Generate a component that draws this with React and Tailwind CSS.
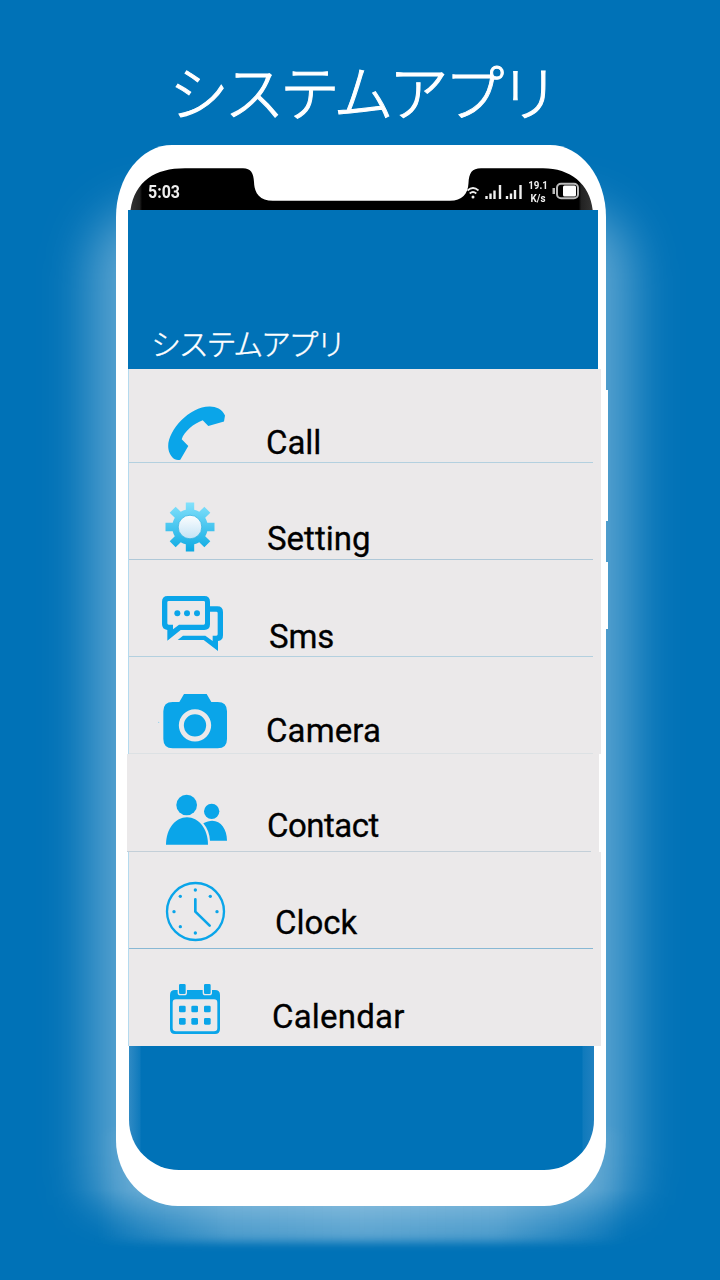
import React from 'react'

const BLUE = "#0aa5e9";

function CallIcon() {
  return (
    <svg className="ml-[39px] mt-[36px] shrink-0" width="58" height="56" viewBox="168 405 58 56">
      <path
        d="M210 406.5C216 406.6 222 409 225 415.5L224 421.5L208.3 426L202.7 420.3C194 423.5 184 431.5 181.7 439.3L188.3 446L180.3 459.7C177 460.3 174 459.5 172.5 457.5C169 453.5 168.2 449 168.2 446C168.2 430 190 406 210 406.5Z"
        fill={BLUE}
      />
    </svg>
  );
}

function SettingIcon() {
  const teeth = [0, 45, 90, 135, 180, 225, 270, 315];
  return (
    <svg className="ml-[36px] mt-[39px] shrink-0" width="50" height="50" viewBox="-25 -25 50 50">
      <defs>
        <linearGradient id="gear" gradientUnits="userSpaceOnUse" x1="0" y1="-25" x2="0" y2="25">
          <stop offset="0" stopColor="#86e2fc" />
          <stop offset="1" stopColor="#0ba9e2" />
        </linearGradient>
        <linearGradient id="hub" x1="0" y1="0" x2="0" y2="1">
          <stop offset="0" stopColor="#fdfeff" />
          <stop offset="1" stopColor="#c3e3f5" />
        </linearGradient>
        <clipPath id="teeth">
          <circle r="17.8" />
          {teeth.map((deg) => (
            <path key={deg} d="M-4.2 -24.5H4.2V-14H-4.2Z" transform={`rotate(${deg})`} />
          ))}
        </clipPath>
      </defs>
      <rect x="-25" y="-25" width="50" height="50" fill="url(#gear)" clipPath="url(#teeth)" />
      <circle r="11.8" fill="url(#hub)" stroke="#39b4e0" strokeWidth="0.8" />
    </svg>
  );
}

function SmsIcon() {
  return (
    <svg className="ml-[33px] mt-[36px] shrink-0" width="62" height="56" viewBox="126 348 186 168">
      <path
        fillRule="evenodd"
        fill={BLUE}
        d="M143 348H253Q270 348 270 365V433Q270 450 253 450H182L142 482V450Q126 448 126 433V365Q126 348 143 348ZM146 363Q142 363 142 367V430Q142 434 146 434H159V448L177 434H251Q255 434 255 430V367Q255 363 251 363Z"
      />
      <path
        fill={BLUE}
        d="M270 379H292Q309 379 309 396V466Q309 482 294 483V513L251 480H173L189 467H256L278 483V467H289Q293 467 293 463V399Q293 395 289 395H270Z"
      />
      <circle cx="172" cy="400" r="9" fill={BLUE} />
      <circle cx="201" cy="400" r="9" fill={BLUE} />
      <circle cx="231" cy="400" r="9" fill={BLUE} />
    </svg>
  );
}

function CameraIcon() {
  return (
    <svg className="ml-[28px] mt-[36px] shrink-0" width="71" height="56" viewBox="111 69 213 168">
      <path
        d="M192 72H260L274 96H293Q321 96 321 124V207Q321 235 293 235H158Q130 235 130 207V124Q130 96 158 96H178Z"
        fill={BLUE}
      />
      <circle cx="225" cy="166" r="41" fill={BLUE} stroke="#ebe9ea" strokeWidth="15" />
      <circle cx="116" cy="157" r="2" fill="#8fd0ef" />
    </svg>
  );
}

function ContactIcon() {
  return (
    <svg className="ml-[38px] mt-[40px] shrink-0" width="63" height="51" viewBox="135 373 189 153">
      <circle cx="200" cy="406" r="31" fill={BLUE} />
      <circle cx="275" cy="425" r="23" fill={BLUE} />
      <path d="M138 525C138 478 166 443 201 443C236 443 264 478 264 525Z" fill={BLUE} />
      <path d="M250 461C290 438 321 468 321 513H270C269 494 263 476 250 461Z" fill={BLUE} />
    </svg>
  );
}

function ClockIcon() {
  const dots = [[226, 90], [271, 109], [291, 155], [226, 219], [181, 200], [162, 155], [181, 109]];
  return (
    <svg className="ml-[36px] mt-[29px] shrink-0" width="61" height="61" viewBox="135 63 183 183">
      <circle cx="226.5" cy="154.5" r="85.5" fill="none" stroke={BLUE} strokeWidth="7" />
      <path d="M226 118V155L269 197" fill="none" stroke={BLUE} strokeWidth="8" strokeLinecap="round" strokeLinejoin="round" />
      {dots.map(([x, y]) => (
        <circle key={`${x}-${y}`} cx={x} cy={y} r="5" fill={BLUE} />
      ))}
    </svg>
  );
}

function CalendarIcon() {
  return (
    <svg className="ml-[41px] mt-[34px] shrink-0" width="50" height="52" viewBox="150 369 150 156">
      <path
        fillRule="evenodd"
        fill={BLUE}
        d="M165 390H285Q300 390 300 405V507Q300 522 285 522H165Q150 522 150 507V405Q150 390 165 390ZM168 418Q158 418 158 428V504Q158 514 168 514H282Q292 514 292 504V428Q292 418 282 418Z"
      />
      {[187, 262].map((x) => (
        <rect key={x} x={x - 12} y="370" width="24" height="34" rx="6" fill={BLUE} stroke="#ebe9ea" strokeWidth="4" />
      ))}
      {[187, 224, 262].map((x) => (
        <g key={x} fill={BLUE}>
          <rect x={x - 10} y="437" width="20" height="20" rx="4" />
          <rect x={x - 10} y="474" width="20" height="20" rx="4" />
        </g>
      ))}
    </svg>
  );
}

const apps = [
  { name: "Call", icon: CallIcon, row: "h-[94px]", cell: "w-[137px]", label: "mt-[54px] tracking-[-0.1px]", line: "bg-[#b3d0df]" },
  { name: "Setting", icon: SettingIcon, row: "h-[97px]", cell: "w-[138px]", label: "mt-[56px] tracking-[0px]", line: "bg-[#afc8d8]" },
  { name: "Sms", icon: SmsIcon, row: "h-[97px]", cell: "w-[140px]", label: "mt-[57px] tracking-[-0.2px]", line: "bg-[#b3d0df]" },
  { name: "Camera", icon: CameraIcon, row: "h-[97px]", cell: "w-[137px]", label: "mt-[54px] tracking-[0.1px]", line: "bg-[#dce1e4]" },
  { name: "Contact", icon: ContactIcon, row: "-ml-[2px] mr-[2px] h-[98px]", cell: "w-[140px]", label: "mt-[52px] tracking-[-0.5px]", line: "bg-[#c3cfd8]" },
  { name: "Clock", icon: ClockIcon, row: "h-[97px]", cell: "w-[146px]", label: "mt-[51px] tracking-[0px]", line: "bg-[#88b8d4]" },
  { name: "Calendar", icon: CalendarIcon, row: "h-[97px]", cell: "w-[143px]", label: "mt-[48px] tracking-[0.2px]", line: "bg-transparent" },
];

function AppRow({ app }) {
  const Icon = app.icon;
  return (
    <li className={`flex flex-col bg-[#ebe9ea] ${app.row}`}>
      <div className="flex min-h-0 flex-1 items-start">
        <div className={`flex shrink-0 ${app.cell}`}>
          <Icon />
        </div>
        <span className={`font-['Roboto',sans-serif] text-[33px] leading-[40px] text-black [-webkit-text-stroke:0.3px_black] ${app.label}`}>
          {app.name}
        </span>
      </div>
      <div className={`mr-[8px] h-px shrink-0 ${app.line}`} />
    </li>
  );
}

function StatusBar() {
  return (
    <div className="relative h-[42px] w-[470px]">
      <svg className="absolute inset-0" width="470" height="42" viewBox="128 168 470 42">
        <defs>
          <linearGradient id="edge" x1="0" x2="1" y1="0" y2="0">
            <stop offset="0" stopColor="#333" />
            <stop offset="0.02" stopColor="#222" />
            <stop offset="0.025" stopColor="#000" />
            <stop offset="0.97" stopColor="#000" />
            <stop offset="0.975" stopColor="#222" />
            <stop offset="1" stopColor="#333" />
          </linearGradient>
        </defs>
        <path
          d="M130.5 210C135 181 155 168.3 185 168.3H243C251 168.3 253.5 173 254 182C254.5 194 260 200.7 273 200.7H450C462 200.7 468 194 468.5 183C469 173 472 168.3 481 168.3H543C570 168.3 590 184 592.7 210Z"
          fill="url(#edge)"
        />
      </svg>
      <div className="relative flex h-full items-start font-['Roboto',sans-serif] font-medium text-[#eee]">
        <span className="ml-[20px] mt-[14px] w-[40px] origin-left scale-x-[0.84] text-[19px] font-bold leading-[20px]">5:03</span>
        <svg className="ml-[278px] mt-[16px] shrink-0" width="58" height="17" viewBox="466 184 58 17" fill="none" stroke="#eee">
          <path d="M467.5 190.5Q473 185.5 478.5 190.5M469.7 193.5Q473 190.5 476.3 193.5" strokeWidth="1.7" />
          <circle cx="473" cy="197" r="1.5" fill="#eee" stroke="none" />
          <path d="M486.5 199V196M490.5 199V193.5M494.5 199V190.5M500 199V185" strokeWidth="2.4" />
          <path d="M507 199V196M511 199V193.5M515 199V190M520.5 199V185" strokeWidth="2.4" />
        </svg>
        <span className="ml-[4px] mt-[10px] flex w-[20px] scale-x-[0.85] flex-col items-center text-[11.5px] font-bold leading-[14px]">
          <span className="block h-[13px]">19.1</span>
          <span className="block">K/s</span>
        </span>
        <svg className="ml-[4px] mt-[14px] shrink-0" width="28" height="18" viewBox="552 182 28 18">
          <rect x="557" y="183.8" width="21" height="14.4" rx="4" fill="#000" stroke="#bbb" strokeWidth="2" />
          <rect x="563" y="185.5" width="13" height="11" rx="1.5" fill="#fff" />
          <rect x="552.5" y="188" width="2.5" height="6" fill="#bbb" />
        </svg>
      </div>
    </div>
  );
}

function App() {
  return (
    <main className="relative isolate flex h-[1280px] w-[720px] flex-col overflow-hidden bg-[#0072b7]">
      {/* halo behind the phone */}
      <div className="absolute inset-0 -z-10 [mask-image:linear-gradient(to_bottom,black_1190px,transparent_1250px)]">
        <div className="absolute left-[91px] top-[208px] h-[1030px] w-[540px] rounded-[60px] bg-white/36 blur-[25px]" />
      </div>
      <div className="absolute left-[96px] top-[1130px] -z-10 h-[112px] w-[532px] bg-[linear-gradient(to_right,transparent,rgba(255,255,255,0.27)_25%,rgba(255,255,255,0.33)_50%,rgba(255,255,255,0.27)_75%,transparent)] blur-[5px]" />

      <h1 className="h-[145px] pl-[169px] pt-[50px] font-['Noto_Sans_CJK_JP',sans-serif] text-[60px] font-light leading-[80px] tracking-[-4.6px] text-white whitespace-nowrap [-webkit-text-stroke:1px_white]">
        システムアプリ
      </h1>

      <div className="relative ml-[116px] h-[1061px] w-[490px] rounded-tl-[56px_72px] rounded-tr-[56px_72px] rounded-bl-[62px_66px] rounded-br-[62px_66px] bg-white pl-[12px] pt-[23px]">
        <div className="absolute left-[489px] top-[245px] h-[131px] w-[3px] bg-white" />
        <div className="absolute left-[489px] top-[417px] h-[67px] w-[3px] bg-white" />
        <StatusBar />
        <header className="flex h-[159px] w-[470px] items-end bg-[#0072b7] pb-[6px] pl-[23px]">
          <h2 className="font-['Noto_Sans_CJK_JP',sans-serif] text-[30px] font-light leading-[42px] tracking-[-2.3px] text-white [-webkit-text-stroke:0.4px_white]">
            システムアプリ
          </h2>
        </header>
        <ul className="flex w-[473px] flex-col border-l border-[#b5daee]">
          {apps.map((app) => (
            <AppRow key={app.name} app={app} />
          ))}
        </ul>
        <div className="ml-px h-[124px] w-[465px] rounded-b-[50px] bg-[linear-gradient(to_right,#2f8ac4,#0f7abc_11px,#0072b7_12px,#0072b7_453px,#0f7abc_454px,#2080bf)]" />
      </div>
    </main>
  )
}

export default App
